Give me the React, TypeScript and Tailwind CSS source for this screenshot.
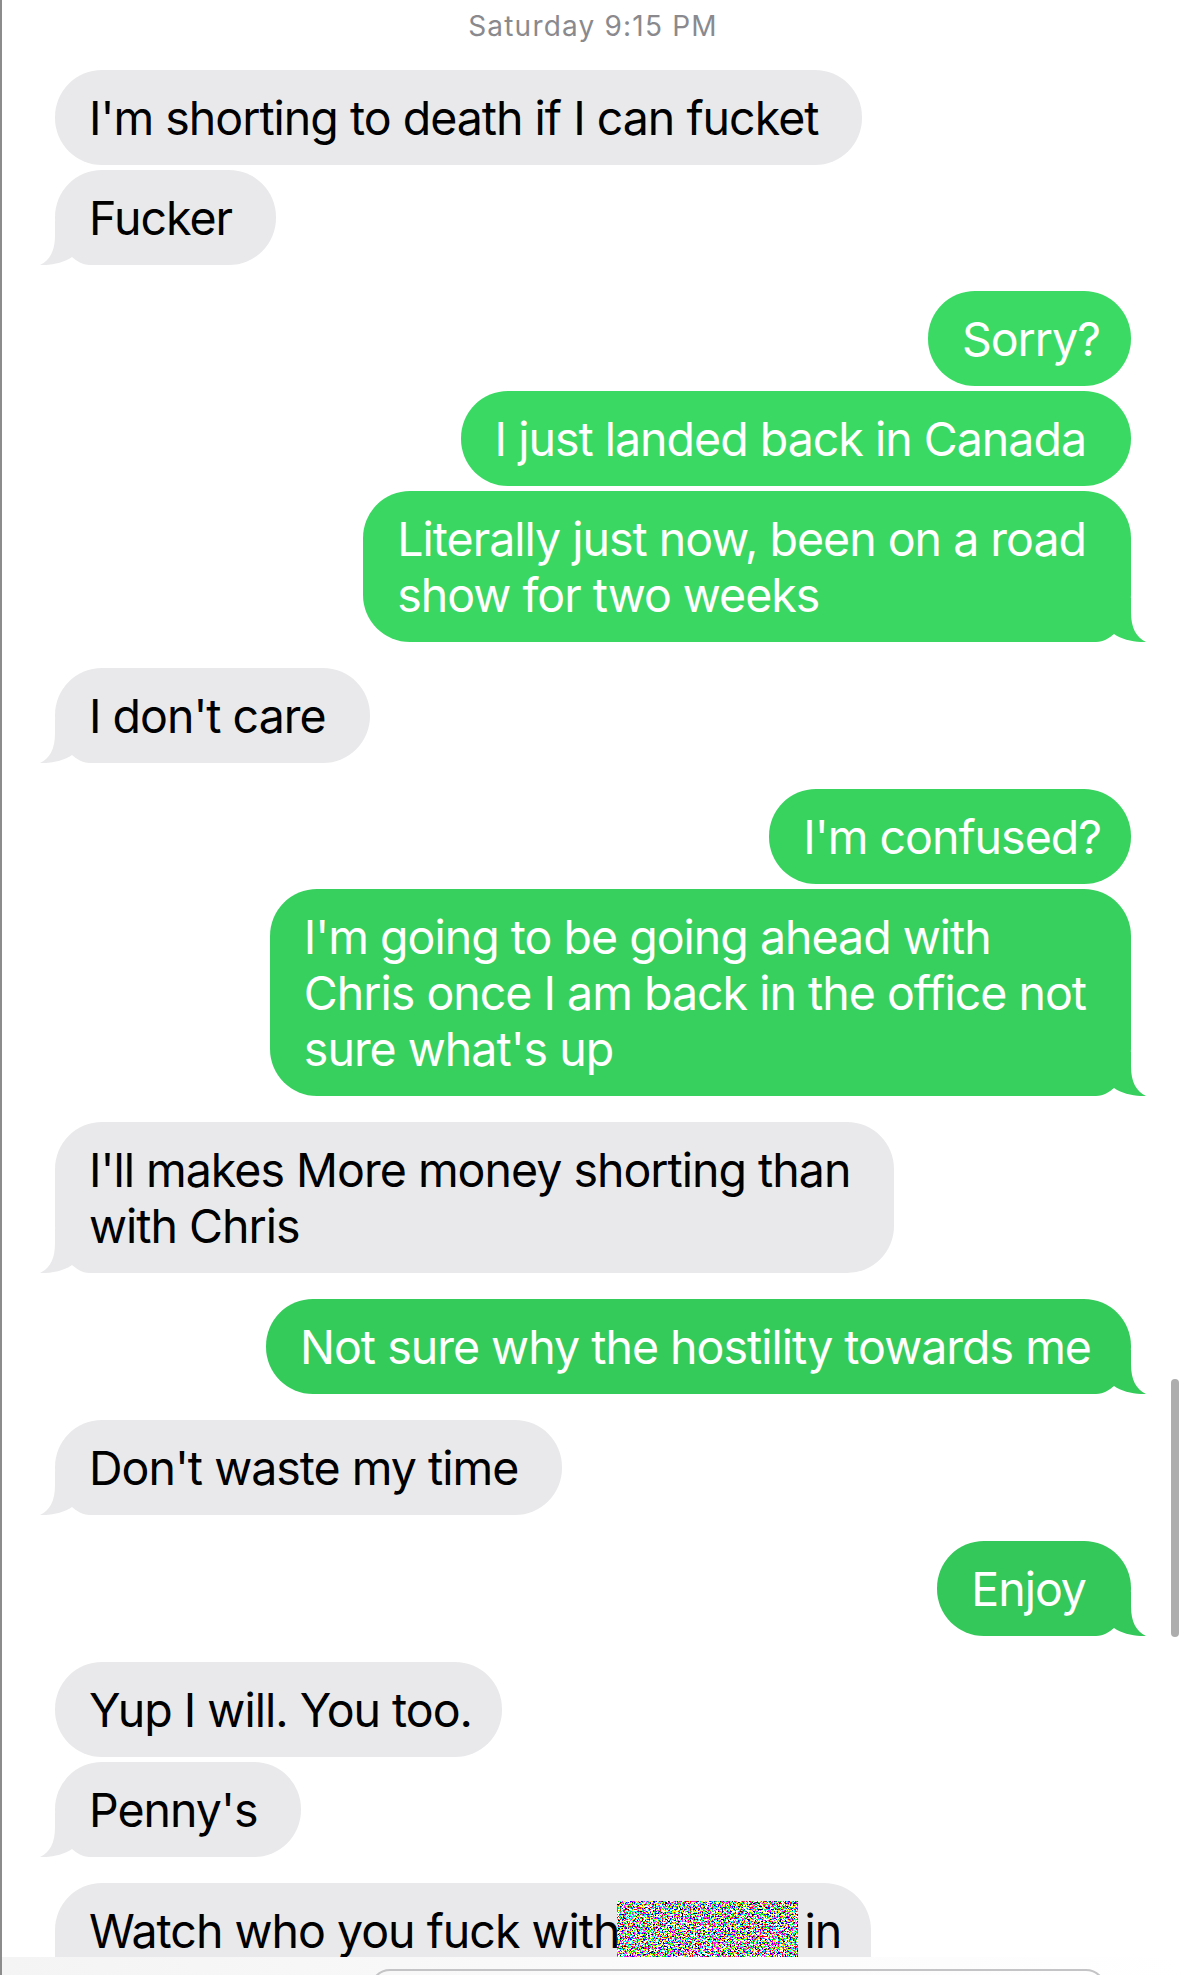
import React from 'react';
import clsx from 'clsx';

type Msg = {
  me: boolean;
  lines: React.ReactNode[];
  tail?: boolean;
  first?: boolean;
  bg?: string;
  fill?: string;
  pr?: string;
};

// green bubbles get a bit darker further down the screen, like the real thing
const messages: Msg[] = [
  { me: false, first: true, lines: ["I'm shorting to death if I can fucket"] },
  { me: false, tail: true, lines: ['Fucker'] },
  { me: true, first: true, lines: ['Sorry?'], bg: 'bg-[#3bda64]', fill: '#3bda64', pr: 'pr-[31px]' },
  { me: true, lines: ['I just landed back in Canada'], bg: 'bg-[#3ad963]', fill: '#3ad963' },
  {
    me: true,
    tail: true,
    lines: ['Literally just now, been on a road', 'show for two weeks'],
    bg: 'bg-[#3ad762]',
    fill: '#3ad762',
  },
  { me: false, first: true, tail: true, lines: ["I don't care"] },
  { me: true, first: true, lines: ["I'm confused?"], bg: 'bg-[#38d35f]', fill: '#38d35f', pr: 'pr-[30px]' },
  {
    me: true,
    tail: true,
    lines: ["I'm going to be going ahead with", 'Chris once I am back in the office not', "sure what's up"],
    bg: 'bg-[#37d05e]',
    fill: '#37d05e',
  },
  { me: false, first: true, tail: true, lines: ["I'll makes More money shorting than", 'with Chris'] },
  {
    me: true,
    first: true,
    tail: true,
    lines: ['Not sure why the hostility towards me'],
    bg: 'bg-[#35cb5b]',
    fill: '#35cb5b',
    pr: 'pr-[40px]',
  },
  { me: false, first: true, tail: true, lines: ["Don't waste my time"] },
  { me: true, first: true, tail: true, lines: ['Enjoy'], bg: 'bg-[#34c759]', fill: '#34c759' },
  { me: false, first: true, lines: ['Yup I will. You too.'], pr: 'pr-[30px]' },
  { me: false, tail: true, lines: ["Penny's"] },
];

const Tail = ({ me, fill }: { me: boolean; fill: string }) => (
  <svg
    width="62"
    height="44"
    viewBox="0 0 62 44"
    className={clsx('absolute bottom-0', me ? 'right-[-15px] -scale-x-100' : 'left-[-15px]')}
  >
    <path
      d="M15 0 L15 14 C15 30 10 39 0 44 C10 44.5 24 42 32 36 C37 40 42 44 50 44 L62 44 L62 0 Z"
      fill={fill}
    />
  </svg>
);

// the blurred-out name in the last message
const Noise = () => (
  <svg width="181" height="62" className="block">
    <filter id="pix" x="0" y="0" width="100%" height="100%">
      <feTurbulence type="fractalNoise" baseFrequency="0.6" numOctaves="3" seed="11" />
      <feComponentTransfer>
        <feFuncR type="discrete" tableValues="0 0 0 0 0 0 1 1 1 1 1 1 1" />
        <feFuncG type="discrete" tableValues="0 0 0 0 0 0 1 1 1 1 1 1 1" />
        <feFuncB type="discrete" tableValues="0 0 0 0 0 0 1 1 1 1 1 1 1" />
        <feFuncA type="linear" slope="0" intercept="1" />
      </feComponentTransfer>
    </filter>
    <rect width="181" height="62" filter="url(#pix)" />
  </svg>
);

const bubbleText = 'text-[46.5px] leading-[56px] tracking-[-1px]';

const Bubble = ({ msg }: { msg: Msg }) => {
  const gray = !msg.me;
  return (
    <div className={clsx('flex', msg.me ? 'justify-end' : 'justify-start', msg.first ? 'mt-[26px]' : 'mt-[5px]')}>
      <div
        className={clsx(
          'relative rounded-[47px] py-[19.5px] pl-[34px]',
          bubbleText,
          gray ? 'bg-[#e9e9eb] text-black' : clsx(msg.bg, 'text-white'),
          msg.pr ?? (gray ? 'pr-[44px]' : 'pr-[45px]')
        )}
      >
        {msg.tail && <Tail me={msg.me} fill={gray ? '#e9e9eb' : msg.fill!} />}
        <div className="relative">
          {msg.lines.map((l, i) => (
            <span key={i} className="block whitespace-nowrap">
              {l}
            </span>
          ))}
        </div>
      </div>
    </div>
  );
};

export default function App() {
  return (
    <div className="relative h-[1975px] w-[1184px] overflow-hidden border-l-2 border-[#8c8c8c] bg-white font-['Inter','Noto_Sans',sans-serif]">
      <div className="pl-[53px] pr-[53px]">
        <div className="pt-[8px] text-center text-[28px] leading-[36px] tracking-[1.2px] text-[#8a8a8e]">
          Saturday 9:15 PM
        </div>

        {messages.map((m, i) => (
          <Bubble key={i} msg={m} />
        ))}

        <div className="mt-[26px] flex justify-start">
          <div className={clsx('relative rounded-[47px] bg-[#e9e9eb] py-[19.5px] pl-[34px] pr-[30px] text-black', bubbleText)}>
            <span className="whitespace-nowrap">
              Watch who you fuck wit<span className="tracking-[-4px]">h</span>
              <span className="inline-block -translate-y-[2px] align-top">
                <Noise />
              </span>
              <span className="pl-[7px]">in</span>
            </span>
            <span className="block">&nbsp;</span>
          </div>
        </div>
      </div>

      {/* scroll indicator */}
      <div className="absolute left-[1169px] top-[1379px] h-[258px] w-[8px] rounded-full bg-[#adadad]" />

      {/* compose bar peeking in at the bottom */}
      <div className="absolute bottom-0 left-0 right-0 h-[18px] bg-linear-to-r from-[#f4f4f4] via-[#fafafa] to-white">
        <div className="ml-[368px] mt-[12px] h-[40px] w-[736px] rounded-[30px] border-2 border-[#c4c4c6]" />
      </div>
    </div>
  );
}
